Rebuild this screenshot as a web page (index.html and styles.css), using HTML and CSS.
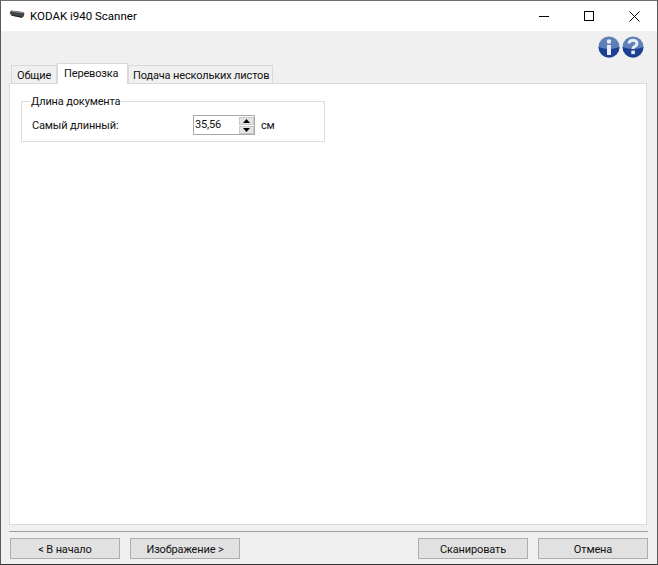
FILE: index.html
```html
<!DOCTYPE html>
<html lang="ru">
<head>
<meta charset="utf-8">
<title>KODAK i940 Scanner</title>
<link rel="stylesheet" href="styles.css">
</head>
<body>
<div class="window">
  <header class="titlebar">
    <svg class="app-icon" width="16" height="9" viewBox="0 0 19 11">
      <path d="M0.5 2.5 L3 0.5 L17 2.5 L18.5 4 L18 7.5 L15.5 9.5 L2 6.5 Z" fill="#444"/>
      <path d="M3 1.5 L17 3.5" stroke="#a5a5a5" stroke-width="1" fill="none"/>
      <path d="M3 6.5 L15.5 9" stroke="#151515" stroke-width="1" fill="none"/>
    </svg>
    <span class="title">KODAK i940 Scanner</span>
    <div class="controls">
      <span class="ctl"><svg width="11" height="11" viewBox="0 0 11 11"><path d="M0 5.5H10" stroke="#000" fill="none"/></svg></span>
      <span class="ctl"><svg width="11" height="11" viewBox="0 0 11 11"><rect x="0.5" y="0.5" width="9" height="9" stroke="#000" fill="none"/></svg></span>
      <span class="ctl"><svg width="11" height="11" viewBox="0 0 11 11"><path d="M0.5 0.5L10.5 10.5M10.5 0.5L0.5 10.5" stroke="#000" fill="none"/></svg></span>
    </div>
  </header>
  <div class="helpbar">
    <svg class="help" width="22" height="22" viewBox="0 0 22 22">
      <circle cx="11" cy="11" r="10.5" fill="#5f7fb8"/>
      <path d="M0.5 11 Q11 15 21.5 11 A10.5 10.5 0 0 1 0.5 11Z" fill="#1c3f94"/>
      <circle cx="11" cy="5.5" r="2.2" fill="#e8ecf4"/>
      <rect x="9" y="9" width="4" height="10" fill="#e8ecf4"/>
    </svg>
    <svg class="help" width="22" height="22" viewBox="0 0 22 22">
      <circle cx="11" cy="11" r="10.5" fill="#5f7fb8"/>
      <path d="M0.5 11 Q11 15 21.5 11 A10.5 10.5 0 0 1 0.5 11Z" fill="#1c3f94"/>
      <path d="M7 7.5 C7 3 15 3 15 7.5 C15 10.5 11 10 11 13" stroke="#e8ecf4" stroke-width="3" fill="none"/>
      <rect x="9.3" y="14.5" width="3.6" height="3.6" fill="#e8ecf4"/>
    </svg>
  </div>
  <nav class="tabs">
    <span class="tab first">Общие</span>
    <span class="tab active">Перевозка</span>
    <span class="tab third">Подача нескольких листов</span>
  </nav>
  <main class="pane">
    <fieldset class="group">
      <legend>Длина документа</legend>
      <div class="row">
        <label class="lbl">Самый длинный:</label>
        <div class="spin">
          <span class="val">35,56</span>
          <span class="arrows">
            <span class="arrow"><svg width="7" height="4" viewBox="0 0 7 4"><path d="M3.5 0L7 4H0Z" fill="#000"/></svg></span>
            <span class="arrow"><svg width="7" height="4" viewBox="0 0 7 4"><path d="M0 0H7L3.5 4Z" fill="#000"/></svg></span>
          </span>
        </div>
        <span class="unit">см</span>
      </div>
    </fieldset>
  </main>
  <div class="sep"></div>
  <footer class="buttons">
    <button class="btn">&lt; В начало</button>
    <button class="btn">Изображение &gt;</button>
    <span class="spacer"></span>
    <button class="btn">Сканировать</button>
    <button class="btn">Отмена</button>
  </footer>
</div>
</body>
</html>
```

FILE: styles.css
```css
* { box-sizing: border-box; }
html, body { margin: 0; padding: 0; }
body { font-family: Roboto, "Noto Sans", sans-serif; font-size: 11px; letter-spacing: -0.15px; color: #111; }
.window {
  width: 658px; height: 565px;
  display: flex; flex-direction: column;
  background: #f0f0f0;
  border: 1px solid #5a5a5a;
  border-top-color: #6e6e6e;
  border-bottom-color: #333;
}
.titlebar {
  height: 30px; flex: none;
  background: #fff;
  display: flex; align-items: center;
  padding-left: 8px;
}
.app-icon { margin-right: 5px; margin-top: -4px; }
.title { font-size: 11.5px; letter-spacing: 0; color: #000; }
.controls { margin-left: auto; display: flex; }
.ctl { width: 45px; height: 30px; display: flex; align-items: center; justify-content: center; }
.helpbar {
  height: 31px; flex: none;
  display: flex; justify-content: flex-end; gap: 2px;
  padding: 5px 13px 0 0;
}
.tabs {
  height: 21px; flex: none;
  display: flex; align-items: flex-end;
  padding-left: 10px;
}
.tab {
  height: 18px;
  padding: 0 4px;
  background: #f0f0f0;
  border: 1px solid #d9d9d9;
  border-bottom: none;
  line-height: 19px;
  white-space: nowrap;
}
.tab.first { width: 46px; padding-left: 5px; }
.tab.active {
  height: 21px; background: #fff;
  width: 71px; padding-left: 6px;
  margin-bottom: -1px; position: relative;
  line-height: 19px;
}
.tab.third { width: 145px; }
.pane {
  margin: 0 0 0 8px; width: 638px; height: 442px; flex: none;
  background: #fff;
  border: 1px solid #d9d9d9;
  padding: 10px 0 0 11px;
}
.group {
  margin: 0; padding: 0; width: 304px; height: 48px;
  border: 1px solid #dcdcdc;
}
.group legend { padding: 2px 1px 0; margin-left: 8px; line-height: 12px; }
.row { display: flex; align-items: center; height: 20px; padding-left: 10px; margin-top: 7px; }
.lbl { width: 161px; }
.spin {
  width: 62px; height: 20px;
  border: 1px solid #a8a8a8;
  display: flex; background: #fff;
  align-items: stretch;
}
.val { flex: 1; padding-left: 1px; line-height: 17px; }
.arrows { width: 15px; display: flex; flex-direction: column; gap: 1px; padding: 1px 0 0; }
.arrow { flex: 1; background: #e4e4e4; display: flex; align-items: center; justify-content: center; border: 1px solid #c8c8c8; }
.unit { margin-left: 6px; }
.sep { height: 1px; flex: none; background: #a0a0a0; margin: 6px 0 0 8px; width: 639px; }
.buttons {
  display: flex; gap: 10px;
  padding: 6px 9px 0 9px;
}
.spacer { flex: 1; }
.btn {
  width: 110px; height: 21px;
  background: #e1e1e1;
  border: 1px solid #adadad;
  font: inherit; letter-spacing: inherit; color: #111;
  padding: 1px 0 0;
}
```
